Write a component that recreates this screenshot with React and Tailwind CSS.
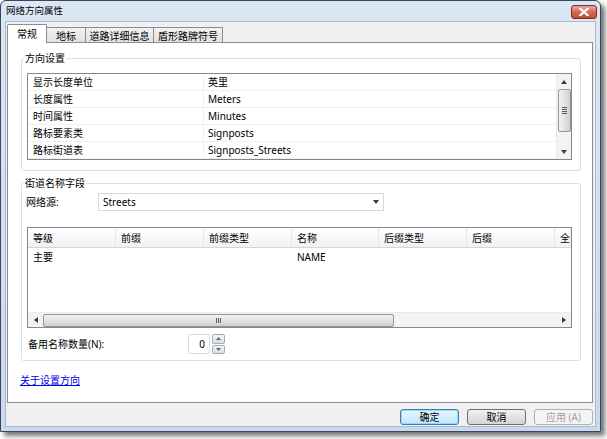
import React from 'react';

const rows = [
  ['显示长度单位', '英里'],
  ['长度属性', 'Meters'],
  ['时间属性', 'Minutes'],
  ['路标要素类', 'Signposts'],
  ['路标街道表', 'Signposts_Streets'],
];

const cols = ['等级', '前缀', '前缀类型', '名称', '后缀类型', '后缀', '全'];

function Tri({ dir }) {
  const pts = {
    up: '0,4 3,0 6,4',
    down: '0,0 3,4 6,0',
    left: '4,0 0,3 4,6',
    right: '0,0 4,3 0,6',
  }[dir];
  const w = dir === 'up' || dir === 'down' ? 6 : 4;
  const h = dir === 'up' || dir === 'down' ? 4 : 6;
  return (
    <svg width={w} height={h} viewBox={`0 0 ${w} ${h}`}>
      <polygon points={pts} fill="#3b3b3b" />
    </svg>
  );
}

function VScroll() {
  return (
    <div className="w-[15px] h-full bg-[#f3f3f3] border-l border-[#eaeaea] flex flex-col items-center">
      <div className="h-[15px] w-full flex items-center justify-center"><Tri dir="up" /></div>
      <div className="w-[13px] h-[43px] rounded-[2px] border border-[#979797] bg-gradient-to-r from-[#f2f2f2] via-[#e2e2e2] to-[#cfcfcf] flex flex-col items-center justify-center gap-[1px]">
        <div className="w-[5px] h-px bg-[#5c5c5c]" />
        <div className="w-[5px] h-px bg-[#5c5c5c]" />
        <div className="w-[5px] h-px bg-[#5c5c5c]" />
        <div className="w-[5px] h-px bg-[#5c5c5c]" />
      </div>
      <div className="flex-1" />
      <div className="h-[15px] w-full flex items-center justify-center"><Tri dir="down" /></div>
    </div>
  );
}

function HScroll() {
  return (
    <div className="h-[15px] w-full bg-[#f3f3f3] border-t border-[#eaeaea] flex items-center">
      <div className="w-[15px] h-full flex items-center justify-center"><Tri dir="left" /></div>
      <div className="w-[351px] h-[13px] rounded-[2px] border border-[#979797] bg-gradient-to-b from-[#f2f2f2] via-[#e2e2e2] to-[#cfcfcf] flex items-center justify-center gap-[1px]">
        <div className="w-px h-[5px] bg-[#5c5c5c]" />
        <div className="w-px h-[5px] bg-[#5c5c5c]" />
        <div className="w-px h-[5px] bg-[#5c5c5c]" />
      </div>
      <div className="flex-1" />
      <div className="w-[15px] h-full flex items-center justify-center"><Tri dir="right" /></div>
    </div>
  );
}

function Btn({ children, kind }) {
  const base = 'w-[59px] h-[16px] rounded-[3px] border flex items-center justify-center text-[10px] leading-none';
  if (kind === 'default')
    return <div className={`${base} border-[#3c7fb1] bg-gradient-to-b from-[#eaf6fd] to-[#bee6fd] shadow-[0_0_0_1px_#9ad8f7_inset]`}>{children}</div>;
  if (kind === 'disabled')
    return <div className={`${base} border-[#adb2b5] bg-[#f4f4f4] text-[#a0a0a0]`}>{children}</div>;
  return <div className={`${base} border-[#707070] bg-gradient-to-b from-[#f2f2f2] to-[#d5d5d5]`}>{children}</div>;
}

export default function App() {
  return (
    <div className="w-[607px] h-[439px] bg-white overflow-hidden font-['Noto_Sans','Noto_Sans_CJK_SC',sans-serif] text-black">
      <div className="w-[601px] h-[432px] border border-[#384858] rounded-t-[6px] bg-gradient-to-b from-[#dbe7f4] to-[#c9daee] shadow-[4px_4px_5px_rgba(0,0,0,0.55)] flex flex-col">
        {/* title bar */}
        <div className="h-[20px] flex items-center pl-[5px] pr-[3px] shrink-0">
          <span className="text-[9.5px] leading-none text-black">网络方向属性</span>
          <div className="flex-1" />
          <div className="w-[26px] h-[14px] mt-[2px] rounded-[3px] border border-[#7a2f26] bg-gradient-to-b from-[#e9a99a] via-[#d46a58] to-[#c44a36] flex items-center justify-center">
            <svg width="10" height="8" viewBox="0 0 10 8">
              <path d="M1 0.5 L9 7.5 M9 0.5 L1 7.5" stroke="#fff" strokeWidth="2.2" strokeLinecap="square" />
            </svg>
          </div>
        </div>

        {/* body */}
        <div className="flex-1 mx-[4px] mb-[4px] bg-[#f0f0f0] border border-[#aab8c8] flex flex-col px-[1px] pt-[2px]">
          {/* tabs */}
          <div className="flex items-end h-[19px] text-[10px] leading-none">
            <div className="relative z-10 w-[40px] h-[19px] bg-white border border-b-0 border-[#898c95] rounded-t-[2px] flex items-center justify-center pb-[1px]">常规</div>
            <div className="w-[40px] h-[16px] -ml-px bg-gradient-to-b from-[#f2f2f2] to-[#e0e0e0] border border-[#898c95] border-b-0 flex items-center justify-center">地标</div>
            <div className="w-[69px] h-[16px] -ml-px bg-gradient-to-b from-[#f2f2f2] to-[#e0e0e0] border border-[#898c95] border-b-0 flex items-center justify-center">道路详细信息</div>
            <div className="w-[70px] h-[16px] -ml-px bg-gradient-to-b from-[#f2f2f2] to-[#e0e0e0] border border-[#898c95] border-b-0 flex items-center justify-center">盾形路牌符号</div>
          </div>

          {/* panel */}
          <div className="w-[586px] h-[361px] -mt-px bg-white border border-[#898c95] flex flex-col text-[10px]">
            {/* 方向设置 */}
            <fieldset className="ml-[13px] mt-[9px] w-[560px] border border-[#d5dfe5] rounded-[3px] p-0">
              <legend className="ml-[2px] px-[1px] leading-[12px]">方向设置</legend>
              <div className="pl-[5px] pt-[9px] pb-[10px]">
                <div className="w-[545px] h-[87px] border border-[#828790] flex">
                  <div className="flex-1 flex flex-col">
                    {rows.map(([k, v]) => (
                      <div key={k} className="h-[17px] border-b border-[#f0f0f0] flex items-center leading-none">
                        <div className="w-[176px] h-full border-r border-[#f0f0f0] flex items-center pl-[5px]">{k}</div>
                        <div className="pl-[4px]">{v}</div>
                      </div>
                    ))}
                  </div>
                  <VScroll />
                </div>
              </div>
            </fieldset>

            {/* 街道名称字段 */}
            <fieldset className="ml-[13px] mt-[6px] w-[560px] border border-[#d5dfe5] rounded-[3px] p-0">
              <legend className="ml-[2px] px-[1px] leading-[12px]">街道名称字段</legend>
              <div className="pt-[4px] pb-[6px]">
                <div className="flex items-center">
                  <div className="w-[76px] pl-[4px] leading-none">网络源:</div>
                  <div className="w-[286px] h-[18px] border border-[#d9d9d9] bg-white flex items-center pl-[4px] pr-[4px] leading-none">
                    <span>Streets</span>
                    <div className="flex-1" />
                    <Tri dir="down" />
                  </div>
                </div>

                <div className="ml-[5px] mt-[16px] w-[545px] h-[101px] border border-[#828790] flex flex-col overflow-hidden">
                  <div className="h-[20px] flex bg-gradient-to-b from-white to-[#f1f2f4] border-b border-[#d5d5d5] shrink-0">
                    {cols.map((c, i) => (
                      <div key={c} className={`${i === 6 ? 'flex-1' : i === 3 ? 'w-[87px]' : 'w-[88px]'} h-full border-r border-[#e3e6ea] flex items-center pl-[5px] leading-none whitespace-nowrap overflow-hidden`}>{c}</div>
                    ))}
                  </div>
                  <div className="flex-1 flex items-start pt-[4px] leading-none">
                    <div className="w-[264px] pl-[5px]">主要</div>
                    <div className="pl-[5px]">NAME</div>
                  </div>
                  <HScroll />
                </div>

                <div className="mt-[6px] flex items-center">
                  <div className="w-[166px] pl-[6px] leading-none">备用名称数量(N):</div>
                  <div className="w-[22px] h-[20px] border border-[#dadada] rounded-[2px] bg-white flex items-center justify-end pr-[4px] leading-none">0</div>
                  <div className="ml-[2px] w-[13px] h-[20px] flex flex-col gap-px">
                    <div className="flex-1 border border-[#a7abb0] rounded-[2px] bg-gradient-to-b from-[#f5f5f5] to-[#dcdcdc] flex items-center justify-center"><svg width="5" height="3" viewBox="0 0 5 3"><polygon points="0,3 2.5,0 5,3" fill="#3d6a98" /></svg></div>
                    <div className="flex-1 border border-[#a7abb0] rounded-[2px] bg-gradient-to-b from-[#f5f5f5] to-[#dcdcdc] flex items-center justify-center"><svg width="5" height="3" viewBox="0 0 5 3"><polygon points="0,0 2.5,3 5,0" fill="#3d6a98" /></svg></div>
                  </div>
                </div>
              </div>
            </fieldset>

            <div className="ml-[12px] mt-[14px] leading-none">
              <span className="text-[#0000ee] underline">关于设置方向</span>
            </div>
          </div>

          {/* buttons */}
          <div className="mt-[6px] flex justify-end gap-[8px] pr-[1px]">
            <Btn kind="default">确定</Btn>
            <Btn>取消</Btn>
            <Btn kind="disabled">应用 (A)</Btn>
          </div>
        </div>
      </div>
    </div>
  );
}
